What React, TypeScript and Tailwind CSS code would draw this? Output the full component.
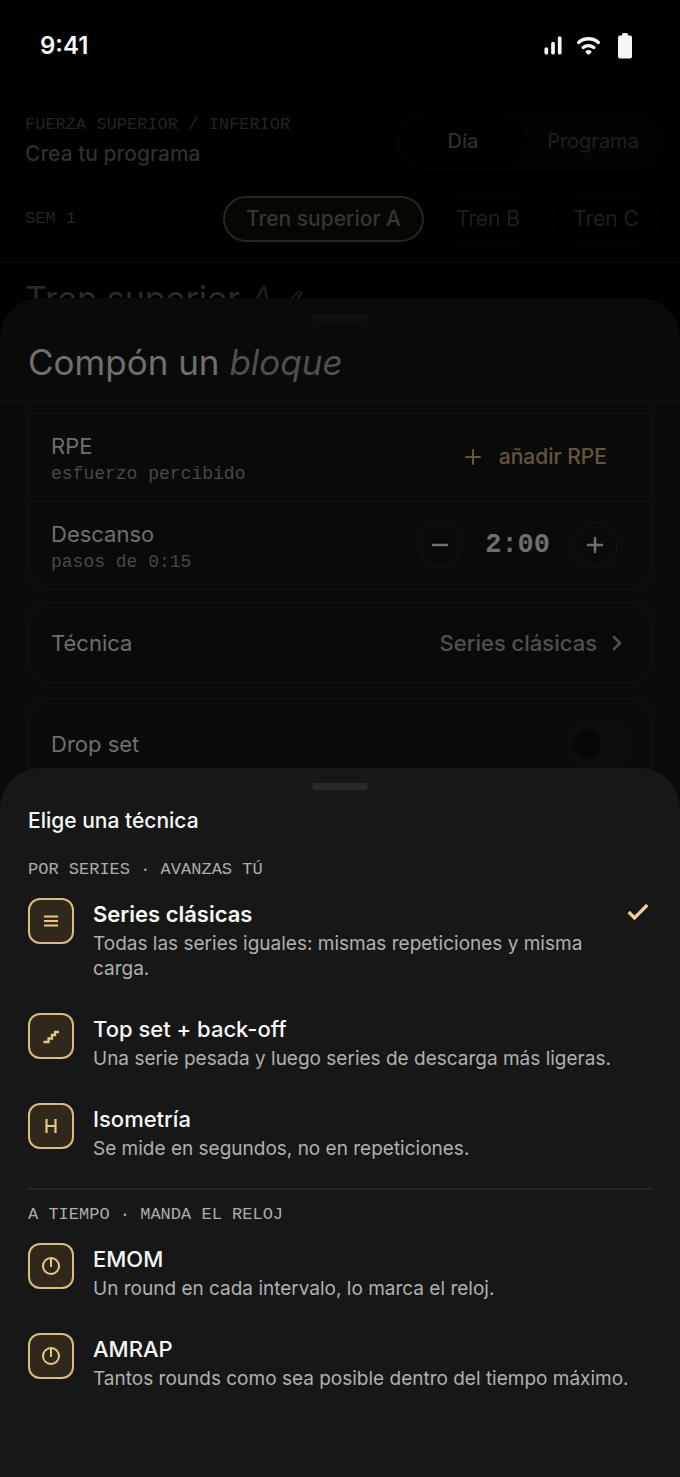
import { useState } from 'react'
import type { ReactNode } from 'react'
import { Check, ChevronRight, Minus, Pencil, Plus } from 'lucide-react'

type Technique = {
  id: string
  name: string
  description: string
  icon: ReactNode
}

const glyph = {
  width: 24,
  height: 24,
  viewBox: '0 0 24 24',
  fill: 'none',
  stroke: 'currentColor',
  strokeWidth: 2,
  'aria-hidden': true,
}

function LinesIcon() {
  return (
    <svg {...glyph}>
      <path d="M5 7.500h14M5 12h14M5 16.500h14" />
    </svg>
  )
}

function StairsIcon() {
  return (
    <svg {...glyph}>
      <path d="M4.500 18h5v-3.500h3.500v-3.500h3V8h4" strokeWidth="2.300" />
    </svg>
  )
}

function HoldIcon() {
  return (
    <svg {...glyph}>
      <path d="M7.500 5v14M16.500 5v14M7.500 12h9" strokeWidth="2.200" />
    </svg>
  )
}

function ClockIcon() {
  return (
    <svg {...glyph}>
      <circle cx="12" cy="12" r="8" />
      <path d="M12 4v9" />
    </svg>
  )
}

const bySeries: Technique[] = [
  {
    id: 'classic',
    name: 'Series clásicas',
    description: 'Todas las series iguales: mismas repeticiones y misma carga.',
    icon: <LinesIcon />,
  },
  {
    id: 'topset',
    name: 'Top set + back-off',
    description: 'Una serie pesada y luego series de descarga más ligeras.',
    icon: <StairsIcon />,
  },
  {
    id: 'isometric',
    name: 'Isometría',
    description: 'Se mide en segundos, no en repeticiones.',
    icon: <HoldIcon />,
  },
]

const byTime: Technique[] = [
  {
    id: 'emom',
    name: 'EMOM',
    description: 'Un round en cada intervalo, lo marca el reloj.',
    icon: <ClockIcon />,
  },
  {
    id: 'amrap',
    name: 'AMRAP',
    description: 'Tantos rounds como sea posible dentro del tiempo máximo.',
    icon: <ClockIcon />,
  },
]

function StatusBar() {
  return (
    <div className="flex h-[92px] items-center justify-between pr-[48px] pl-10 text-[#f7f7f7]">
      <span className="text-[24px] leading-8 font-semibold">9:41</span>
      <div className="flex items-center">
        <svg width="20" height="20" viewBox="0 0 20 20" fill="none" stroke="currentColor" strokeWidth="3.700" strokeLinecap="round" aria-hidden="true">
          <path d="M2.300 13v3.700M9 7.700v9M15.700 2v14.700" />
        </svg>
        <svg className="ml-3" width="26" height="20" viewBox="0 0 26 20" fill="none" stroke="currentColor" strokeWidth="3.400" strokeLinecap="round" aria-hidden="true">
          <path d="M2.600 6.500a15 15 0 0 1 19.800 0M7.200 11.500a8.500 8.500 0 0 1 10.600 0" />
          <path d="M9.600 15.300a4.500 4.500 0 0 1 5.800 0c.3.300.3.700 0 1l-2.200 2.200a1 1 0 0 1-1.400 0l-2.200-2.200c-.3-.3-.3-.7 0-1z" fill="currentColor" stroke="none" />
        </svg>
        <svg className="ml-4" width="14" height="26" viewBox="0 0 14 26" fill="currentColor" aria-hidden="true">
          <rect x="4" y="0" width="6" height="5" rx="1.500" />
          <rect x="0" y="2.500" width="14" height="23" rx="2" />
        </svg>
      </div>
    </div>
  )
}

function ProgramHeader() {
  return (
    <header className="border-b border-[#0b0b0b] pb-5 pl-[25px] text-[#2f2f2f]">
      <div className="flex items-center justify-between pt-[18px] pr-4">
        <div>
          <p className="font-['Liberation_Mono',monospace] text-[17px] leading-6 text-[#242424]">
            FUERZA SUPERIOR / INFERIOR
          </p>
          <h1 className="mt-0.5 text-[21px] leading-[30px] font-medium">Crea tu programa</h1>
        </div>
        <div className="flex rounded-full bg-[#030303] p-1">
          <button type="button" className="h-[53px] w-[126px] rounded-full bg-[#010101] text-[20px] font-medium">
            Día
          </button>
          <button type="button" className="h-[53px] w-[134px] rounded-full text-[20px] text-[#1f1f1f]">
            Programa
          </button>
        </div>
      </div>
      <div className="mt-[25px] flex items-center justify-between overflow-hidden pr-5">
        <span className="font-['Liberation_Mono',monospace] text-[17px] leading-6 text-[#242424]">SEM 1</span>
        <div className="flex gap-[10px] text-[21px] text-[#1f1f1f]">
          <button type="button" className="h-[46px] w-[201px] rounded-full border-2 border-[#2a2419] bg-[#080602] font-medium text-[#373533]">
            Tren superior A
          </button>
          <button type="button" className="h-[46px] w-[108px] rounded-full border border-[#060606]">
            Tren B
          </button>
          <button type="button" className="h-[46px] w-[108px] rounded-full border border-[#060606]">
            Tren C
          </button>
        </div>
      </div>
    </header>
  )
}

function Grip({ className }: { className: string }) {
  return <div className={`mx-auto h-[7px] w-14 rounded-full ${className}`} />
}

function BlockSheet() {
  const [rest, setRest] = useState(120)
  const restText = `${Math.floor(rest / 60)}:${String(rest % 60).padStart(2, '0')}`

  return (
    <section className="absolute inset-x-0 top-[298px] bottom-0 overflow-hidden rounded-t-[40px] bg-[#0a0a0a] text-[22px] text-[#6f6f6f]">
      <div className="border-b-2 border-[#0f0f10] pt-4 pb-[14px]">
        <Grip className="bg-[#111112]" />
        <h2 className="mt-4 px-7 text-[35px] leading-[50px]">
          Compón un <em className="text-[#505050]">bloque</em>
        </h2>
      </div>
      <div className="px-7">
        <div className="rounded-b-[20px] border-x-2 border-b-2 border-[#0f0f10] pt-[9px]">
          <div className="flex h-[88px] items-center justify-between border-t-2 border-[#0f0f10] pr-8 pl-[21px]">
            <div className="pt-1.5">
              <h3 className="leading-7">RPE</h3>
              <p className="font-['Liberation_Mono',monospace] text-[18px] leading-7 text-[#484848]">esfuerzo percibido</p>
            </div>
            <button type="button" className="flex items-center gap-[14px] pr-[11px] text-[21px] font-medium text-[#645739]">
              <Plus size={24} strokeWidth={2} />
              añadir RPE
            </button>
          </div>
          <div className="flex h-[88px] items-center justify-between border-t-2 border-[#0f0f10] pr-8 pl-[21px]">
            <div className="pt-1.5">
              <h3 className="leading-7">Descanso</h3>
              <p className="font-['Liberation_Mono',monospace] text-[18px] leading-7 text-[#484848]">pasos de 0:15</p>
            </div>
            <div className="flex items-center gap-[22px]">
              <button
                type="button"
                aria-label="Menos descanso"
                onClick={() => setRest(Math.max(0, rest - 15))}
                className="flex size-[46px] items-center justify-center rounded-full border-2 border-[#0f0f10]"
              >
                <Minus size={24} strokeWidth={2.5} />
              </button>
              <span className="font-['Liberation_Mono',monospace] text-[27px] leading-8 font-bold">{restText}</span>
              <button
                type="button"
                aria-label="Más descanso"
                onClick={() => setRest(rest + 15)}
                className="flex size-[46px] items-center justify-center rounded-full border-2 border-[#0f0f10]"
              >
                <Plus size={24} strokeWidth={2.5} />
              </button>
            </div>
          </div>
        </div>
        <button
          type="button"
          className="mt-3 flex h-[82px] w-full items-center justify-between rounded-[20px] border-2 border-[#0f0f10] px-[21px]"
        >
          <span>Técnica</span>
          <span className="flex items-center gap-2 font-medium text-[#505050]">
            Series clásicas
            <ChevronRight size={24} strokeWidth={2.5} />
          </span>
        </button>
        <div className="mt-[14px] flex h-[92px] items-center justify-between rounded-[20px] border-2 border-[#0f0f10] pr-[18px] pl-[21px]">
          <label htmlFor="dropset">Drop set</label>
          <input
            id="dropset"
            type="checkbox"
            role="switch"
            className="flex h-10 w-[65px] appearance-none items-center rounded-full border-2 border-[#0d0d0f] bg-[#0c0c0e] px-1 before:size-7 before:rounded-full before:bg-[#070707] before:content-[''] checked:justify-end"
          />
        </div>
      </div>
    </section>
  )
}

function TechniqueRow({ item, selected, onSelect }: { item: Technique; selected: boolean; onSelect: () => void }) {
  return (
    <button type="button" onClick={onSelect} aria-pressed={selected} className="flex w-full items-start py-4 text-left">
      <span className="flex size-[46px] shrink-0 items-center justify-center rounded-xl border-2 border-[#d9bc82] bg-[#30281a] text-[#e8c888]">
        {item.icon}
      </span>
      <span className="ml-[19px] flex min-w-0 flex-1 flex-col">
        <span className={selected ? 'text-[22px] leading-[33px] font-semibold' : 'text-[22px] leading-[33px] font-medium'}>
          {item.name}
        </span>
        <span className="text-[19px] leading-[25px] text-[#b0b0b0]">{item.description}</span>
      </span>
      {selected && <Check className="ml-6 shrink-0 text-[#efd08f]" size={28} strokeWidth={2.8} strokeLinecap="butt" strokeLinejoin="miter" />}
    </button>
  )
}

function TechniquePicker() {
  const [selected, setSelected] = useState('classic')

  const renderRow = (item: Technique) => (
    <TechniqueRow key={item.id} item={item} selected={selected === item.id} onSelect={() => setSelected(item.id)} />
  )

  return (
    <section className="absolute inset-x-0 bottom-0 rounded-t-[40px] bg-[#171718] px-7 pt-[15px] pb-[70px] text-[#f7f7f7]">
      <Grip className="bg-[#29292a]" />
      <h2 className="mt-4 text-[21px] leading-[30px] font-medium">Elige una técnica</h2>
      <h3 className="mt-[22px] font-['Liberation_Mono',monospace] text-[17px] leading-6 text-[#adadad]">
        POR SERIES · AVANZAS TÚ
      </h3>
      {bySeries.map(renderRow)}
      <hr className="mt-[11px] border-t-2 border-[#242425]" />
      <h3 className="mt-[13px] font-['Liberation_Mono',monospace] text-[17px] leading-6 text-[#adadad]">
        A TIEMPO · MANDA EL RELOJ
      </h3>
      {byTime.map(renderRow)}
    </section>
  )
}

export default function App() {
  return (
    <main className="relative min-h-screen overflow-hidden bg-black font-['Inter',sans-serif]">
      <StatusBar />
      <ProgramHeader />
      <div className="flex items-center gap-3 px-[25px] pt-3 text-[34px] leading-[48px] text-[#2a2a2a]">
        <h2>
          Tren superior <em className="text-[#1c1c1c]">A</em>
        </h2>
        <Pencil size={18} className="text-[#1c1c1c]" />
      </div>
      <BlockSheet />
      <TechniquePicker />
    </main>
  )
}
